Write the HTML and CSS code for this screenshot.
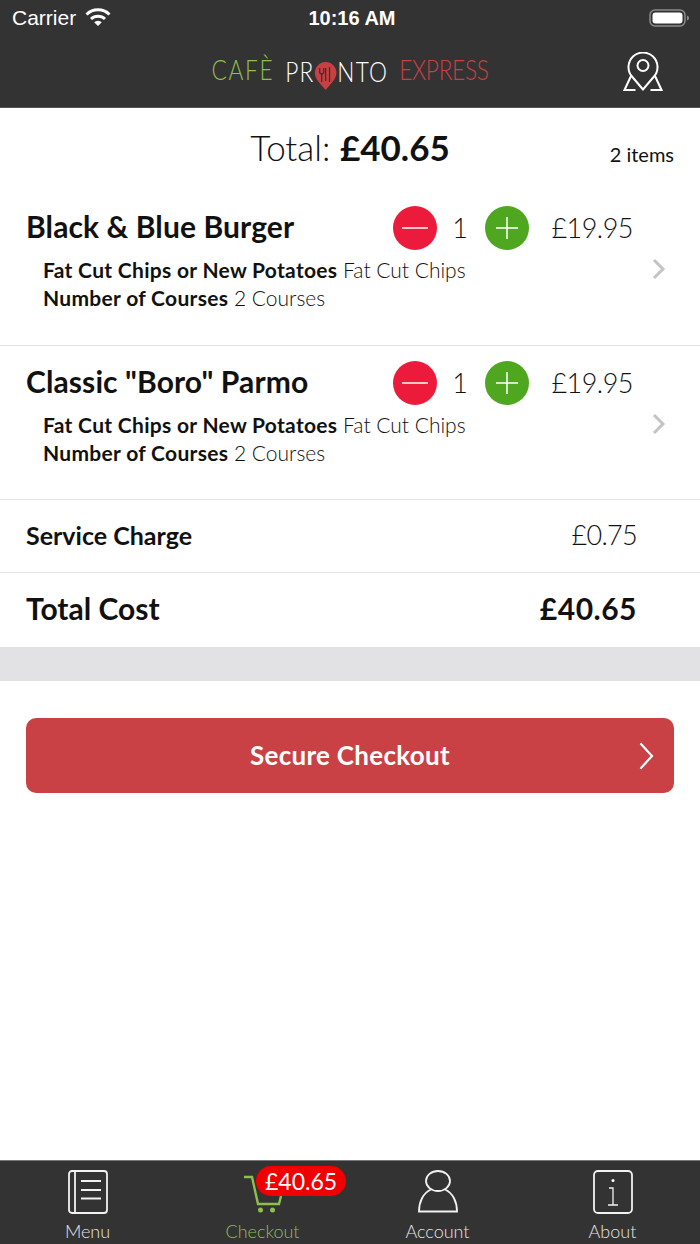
FILE: index.html
```html
<!DOCTYPE html>
<html lang="en">
<head>
    <meta charset="UTF-8">
    <meta name="viewport" content="width=device-width, initial-scale=1.0">
    <title>Checkout</title>
    <link rel="stylesheet" href="styles.css">
</head>
<body>
    <header class="top">
        <div class="status">
            <div class="status-left">
                <span>Carrier</span>
                <svg class="wifi" width="26" height="18" viewBox="0 0 26 18">
                    <path d="M1.5 6.5a16.5 16.5 0 0 1 23 0" fill="none" stroke="#fff" stroke-width="3"/>
                    <path d="M6 11a10 10 0 0 1 14 0" fill="none" stroke="#fff" stroke-width="3"/>
                    <path d="M9.2 14.2 13 18l3.8-3.8a5.4 5.4 0 0 0-7.6 0z" fill="#fff"/>
                </svg>
            </div>
            <div class="clock">10:16 AM</div>
            <div class="status-right">
                <svg width="42" height="20" viewBox="0 0 42 20">
                    <rect x="1" y="2" width="35" height="16" rx="5" fill="none" stroke="#8a8a8a" stroke-width="1.5"/>
                    <rect x="3.5" y="4.5" width="30" height="11" rx="3" fill="#fff"/>
                    <path d="M38 7.5c1.5.4 2 1.3 2 2.5s-.5 2.1-2 2.5z" fill="#8a8a8a"/>
                </svg>
            </div>
        </div>
        <div class="nav">
            <div class="logo">
                <span class="logo-green">CAFÈ</span>
                <span class="logo-white">PR<svg class="logo-pin" width="28" height="30" viewBox="0 0 24 30" preserveAspectRatio="none">
                    <path d="M12 1a11 11 0 0 1 11 11c0 6-6 11-11 17C7 23 1 18 1 12A11 11 0 0 1 12 1z" fill="#c94043"/>
                    <path d="M12 7v13M16 6v15M6 7v4q0 2 2 2t2-2V7M8 13v8" fill="none" stroke="#333" stroke-width="1.3"/>
                </svg>NTO</span>
                <span class="logo-red">EXPRESS</span>
            </div>
            <svg class="map-icon" width="40" height="40" viewBox="0 0 40 40" fill="none" stroke="#fff" stroke-width="2">
                <path d="M20 37.5 9 24.500A14.500 14.500 0 1 1 31 24.500z"/>
                <circle cx="20" cy="13.500" r="5.500"/>
                <path d="M8 24 1.500 38h11M32 24l6.500 14h-11"/>
            </svg>
        </div>
    </header>

    <main class="content">
        <div class="summary">
            <div class="summary-total">Total: <b>£40.65</b></div>
            <div class="summary-count">2 items</div>
        </div>

        <section class="item">
            <div class="item-top">
                <h2>Black &amp; Blue Burger</h2>
                <button class="round minus"><svg width="26" height="26" viewBox="0 0 26 26"><path d="M0 13h26" stroke="#fff" stroke-width="1.5"/></svg></button>
                <span class="qty">1</span>
                <button class="round plus"><svg width="22" height="22" viewBox="0 0 22 22"><path d="M0 11h22M11 0v22" stroke="#fff" stroke-width="1.5"/></svg></button>
                <span class="price">£19.95</span>
            </div>
            <div class="item-body">
                <div class="options">
                    <p><b>Fat Cut Chips or New Potatoes</b> Fat Cut Chips</p>
                    <p><b>Number of Courses</b> 2 Courses</p>
                </div>
                <svg class="chev" width="14" height="22" viewBox="0 0 14 22"><path d="M2 2l9 9-9 9" fill="none" stroke="#c4c4c4" stroke-width="3"/></svg>
            </div>
        </section>

        <section class="item">
            <div class="item-top">
                <h2>Classic "Boro" Parmo</h2>
                <button class="round minus"><svg width="26" height="26" viewBox="0 0 26 26"><path d="M0 13h26" stroke="#fff" stroke-width="1.5"/></svg></button>
                <span class="qty">1</span>
                <button class="round plus"><svg width="22" height="22" viewBox="0 0 22 22"><path d="M0 11h22M11 0v22" stroke="#fff" stroke-width="1.5"/></svg></button>
                <span class="price">£19.95</span>
            </div>
            <div class="item-body">
                <div class="options">
                    <p><b>Fat Cut Chips or New Potatoes</b> Fat Cut Chips</p>
                    <p><b>Number of Courses</b> 2 Courses</p>
                </div>
                <svg class="chev" width="14" height="22" viewBox="0 0 14 22"><path d="M2 2l9 9-9 9" fill="none" stroke="#c4c4c4" stroke-width="3"/></svg>
            </div>
        </section>

        <div class="row service">
            <b>Service Charge</b>
            <span>£0.75</span>
        </div>
        <div class="row total-cost">
            <b>Total Cost</b>
            <b class="total-amount">£40.65</b>
        </div>
        <div class="spacer"></div>

        <div class="checkout-wrap">
            <button class="checkout">
                Secure Checkout
                <svg class="checkout-chev" width="16" height="28" viewBox="0 0 16 28"><path d="M2 2l11 12L2 26" fill="none" stroke="#fff" stroke-width="2.2" stroke-linecap="round"/></svg>
            </button>
        </div>
    </main>

    <nav class="tabs">
        <div class="tab">
            <svg width="40" height="44" viewBox="0 0 40 44" fill="none" stroke="#f2f2f2" stroke-width="1.8">
                <rect x="1" y="1" width="38" height="42" rx="3"/>
                <path d="M7 1v42M13 11h20M13 20h20M13 28.500h20"/>
            </svg>
            <span>Menu</span>
        </div>
        <div class="tab active">
            <svg width="40" height="44" viewBox="0 0 40 44" fill="none" stroke="#8fbf4d" stroke-width="2.4">
                <path d="M1 7h8l6 27h21l2-8"/>
                <circle cx="17.500" cy="40" r="2.500" fill="#8fbf4d" stroke="none"/>
                <circle cx="29.500" cy="40" r="2.500" fill="#8fbf4d" stroke="none"/>
            </svg>
            <span>Checkout</span>
            <div class="badge">£40.65</div>
        </div>
        <div class="tab">
            <svg width="40" height="44" viewBox="0 0 40 44" fill="none" stroke="#f2f2f2" stroke-width="1.8">
                <ellipse cx="20" cy="11" rx="12" ry="10"/>
                <path d="M13 19.500C5 23 1 32 1 41.500h38C39 32 35 23 27 19.500"/>
            </svg>
            <span>Account</span>
        </div>
        <div class="tab">
            <svg width="40" height="44" viewBox="0 0 40 44" fill="none" stroke="#f2f2f2" stroke-width="1.8">
                <rect x="1" y="1" width="38" height="42" rx="4"/>
                <circle cx="20" cy="10.500" r="1.500" fill="#fff" stroke="none"/>
                <path d="M16 18h4v17M15 35h10" stroke-width="1.300"/>
            </svg>
            <span>About</span>
        </div>
    </nav>
</body>
</html>
```

FILE: styles.css
```css
* {
    box-sizing: border-box;
}
body {
    margin: 0;
    height: 1244px;
    display: flex;
    flex-direction: column;
    font-family: Lato, "Open Sans", sans-serif;
    background: #ffffff;
    color: #111111;
    overflow: hidden;
}
b {
    font-weight: 700;
}
.top {
    height: 108px;
    background: #333333;
    color: #ffffff;
    border-bottom: 1px solid #555555;
}
.status {
    height: 36px;
    padding: 0 8px 0 12px;
    display: grid;
    grid-template-columns: 1fr 90px 1fr;
    align-items: center;
    font-size: 21px;
}
.status-left {
    display: flex;
    align-items: center;
    gap: 9px;
    font-family: "Liberation Sans", sans-serif;
}
.clock {
    font-family: "Liberation Sans", sans-serif;
    font-size: 20px;
    font-weight: 700;
    white-space: nowrap;
    text-align: center;
}
.status-right {
    display: flex;
    justify-content: flex-end;
    padding-right: 1px;
}
.wifi {
    margin-top: -2px;
}
.nav {
    height: 71px;
    position: relative;
    display: flex;
    justify-content: center;
    align-items: center;
}
.logo {
    display: flex;
    gap: 13px;
    font-size: 27px;
    font-weight: 300;
    transform: scaleX(0.84);
    white-space: nowrap;
}
.logo-green {
    color: #8fbf4d;
    letter-spacing: 2px;
}
.logo-white {
    color: #ffffff;
    display: flex;
    align-items: center;
    letter-spacing: 1.5px;
}
.logo-red {
    color: #c94043;
    letter-spacing: -0.4px;
}
.logo-pin {
    margin: 8px 0 0 -1px;
}
.map-icon {
    position: absolute;
    right: 37px;
    top: 16px;
}
.content {
    flex: 1;
}
.summary {
    height: 82px;
    padding-bottom: 4px;
    position: relative;
    display: flex;
    justify-content: center;
    align-items: center;
}
.summary-total {
    font-size: 35px;
    font-weight: 300;
}
.summary-count {
    position: absolute;
    right: 26px;
    top: 34px;
    font-size: 20px;
    font-weight: 400;
}
.item {
    height: 156px;
    padding: 16px 26px 0 26px;
    border-bottom: 1px solid #e4e4e4;
}
.item + .item {
    height: 154px;
    padding-top: 15px;
}
.item-top {
    display: flex;
    align-items: center;
    height: 44px;
}
.item-top h2 {
    margin: 0;
    padding-bottom: 4px;
    flex: 1;
    font-size: 30px;
    font-weight: 700;
    letter-spacing: 0.1px;
    white-space: nowrap;
}
.round {
    width: 44px;
    height: 44px;
    padding: 0;
    border: none;
    border-radius: 50%;
    display: flex;
    align-items: center;
    justify-content: center;
}
.minus {
    background: #ec1a3b;
}
.plus {
    background: #4ea71e;
}
.qty {
    width: 48px;
    padding: 0 2px 2px 0;
    text-align: center;
    font-size: 27px;
    font-weight: 300;
}
.price {
    width: 145px;
    padding: 0 41px 2px 0;
    text-align: right;
    font-size: 27px;
    font-weight: 300;
    letter-spacing: -0.5px;
}
.item-body {
    display: flex;
    justify-content: space-between;
    align-items: center;
    padding: 6px 8px 0 17px;
}
.options p {
    margin: 0;
    font-size: 21px;
    line-height: 28px;
    font-weight: 300;
}
.options b {
    letter-spacing: 0.3px;
}
.chev {
    margin-bottom: 31px;
}
.row {
    display: flex;
    justify-content: space-between;
    align-items: center;
    padding: 0 63px 0 26px;
    border-bottom: 1px solid #e4e4e4;
}
.service {
    height: 73px;
    padding-bottom: 3px;
    font-size: 25px;
}
.service span {
    font-size: 27px;
    font-weight: 300;
    letter-spacing: -0.7px;
}
.total-cost {
    height: 74px;
    padding-bottom: 5px;
    font-size: 30px;
    border-bottom: 0;
}
.total-amount {
    letter-spacing: 0.5px;
}
.spacer {
    height: 34px;
    background: #e2e2e4;
}
.checkout-wrap {
    padding: 37px 26px 0 26px;
}
.checkout {
    position: relative;
    width: 100%;
    height: 75px;
    padding-bottom: 3px;
    border: none;
    border-radius: 10px;
    background: #ca4145;
    color: #ffffff;
    font-family: inherit;
    font-size: 26px;
    font-weight: 700;
    letter-spacing: 0.3px;
}
.checkout-chev {
    position: absolute;
    right: 19px;
    top: 24px;
}
.tabs {
    height: 84px;
    background: #333333;
    border-top: 1px solid #777777;
    display: grid;
    grid-template-columns: 175px 175px 175px 175px;
}
.tab {
    position: relative;
    display: flex;
    flex-direction: column;
    align-items: center;
    padding-top: 9px;
    color: #e4e4e4;
    font-size: 18px;
    font-weight: 300;
    line-height: 24px;
}
.tab span {
    margin-top: 5px;
}
.tab.active {
    color: #8fbf4d;
}
.badge {
    position: absolute;
    left: 81px;
    top: 5px;
    height: 30px;
    padding: 0 9px;
    border-radius: 15px;
    background: #f00000;
    color: #ffffff;
    font-size: 23px;
    font-weight: 400;
    line-height: 30px;
}
```
